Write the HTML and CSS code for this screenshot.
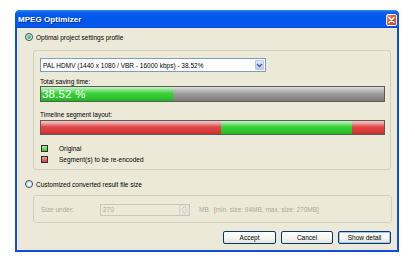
FILE: index.html
```html
<!DOCTYPE html>
<html>
<head>
<meta charset="utf-8">
<link rel="stylesheet" href="styles.css">
</head>
<body>
<div class="window">
  <div class="titlebar">
    <span class="title">MPEG Optimizer</span>
    <span class="close">
      <svg width="11" height="12" viewBox="0 0 11 12"><path d="M3 3.5 L8 8.5 M8 3.5 L3 8.5" stroke="#fff" stroke-width="1.6" stroke-linecap="round"/></svg>
    </span>
  </div>
  <div class="client">
    <div class="radio-row r1"><span class="radio checked"></span><span>Optimal project settings profile</span></div>
    <div class="group g1">
      <div class="combo">
        <span class="combo-text">PAL HDMV (1440 x 1080 / VBR - 16000 kbps) - 38.52%</span>
        <span class="combo-btn"><svg width="7" height="5" viewBox="0 0 7 5"><path d="M1 1 L3.5 3.5 L6 1" stroke="#4d6185" stroke-width="1.4" fill="none"/></svg></span>
      </div>
      <div class="label lbl-total">Total saving time:</div>
      <div class="bar saving">
        <div class="seg green" style="width:38.52%"></div>
        <div class="seg grey fill"></div>
        <span class="pct">38.52 %</span>
      </div>
      <div class="label lbl-timeline">Timeline segment layout:</div>
      <div class="bar timeline">
        <div class="seg red" style="width:52.5%"></div>
        <div class="seg green" style="width:38.3%"></div>
        <div class="seg red fill"></div>
      </div>
      <div class="legend">
        <div class="legend-row"><span class="swatch sw-green"></span><span>Original</span></div>
        <div class="legend-row"><span class="swatch sw-red"></span><span>Segment(s) to be re-encoded</span></div>
      </div>
    </div>
    <div class="radio-row r2"><span class="radio"></span><span>Customized converted result file size</span></div>
    <div class="group g2">
      <span class="size-label">Size under:</span>
      <span class="spin">
        <span class="spin-text">270</span>
        <span class="spin-btns">
          <span class="spin-b"><svg width="5" height="3" viewBox="0 0 5 3"><path d="M0.5 2.5 L2.5 0.5 L4.5 2.5" stroke="#c0bdb0" fill="none"/></svg></span>
          <span class="spin-b"><svg width="5" height="3" viewBox="0 0 5 3"><path d="M0.5 0.5 L2.5 2.5 L4.5 0.5" stroke="#c0bdb0" fill="none"/></svg></span>
        </span>
      </span>
      <span class="mb">MB</span>
      <span class="range">[min. size: 94MB, max. size: 270MB]</span>
    </div>
    <div class="buttons">
      <span class="btn">Accept</span>
      <span class="btn">Cancel</span>
      <span class="btn default">Show detail</span>
    </div>
  </div>
</div>
</body>
</html>
```
FILE: styles.css
```css
html, body {
  margin: 0;
  padding: 0;
  background: #fff;
}
body {
  font-family: "Liberation Sans", Arial, sans-serif;
  font-size: 6.5px;
  color: #000;
}
.window {
  margin: 10px 0 0 15px;
  width: 384px;
  height: 242px;
  display: flex;
  flex-direction: column;
  background: #0b4fdc;
  border-radius: 5px 5px 0 0;
  overflow: hidden;
}
.titlebar {
  height: 18px;
  flex: none;
  display: flex;
  align-items: center;
  justify-content: space-between;
  padding: 0 2px 0 3px;
  background: linear-gradient(#3a8cf8 0%, #0d62ef 12%, #0058ec 35%, #0056ea 70%, #0a5bee 88%, #0047d4 100%);
}
.title {
  color: #fff;
  font-weight: bold;
  font-size: 8px;
  text-shadow: 1px 1px 0 #0b2d97;
  letter-spacing: 0.05px;
}
.close {
  width: 11px;
  height: 12px;
  box-sizing: border-box;
  border: 1px solid #f3f3f3;
  border-radius: 2px;
  background: linear-gradient(135deg, #eb9a7e 0%, #dc5c35 40%, #c9411a 100%);
  display: flex;
  align-items: center;
  justify-content: center;
  margin-top: 1px;
}
.close svg { display: block; margin: -1px; }
.client {
  flex: 1;
  margin: 0 2px 2px 2px;
  background: #ece9d8;
  display: flex;
  flex-direction: column;
}
.radio-row {
  display: flex;
  align-items: center;
  height: 10px;
  margin-left: 8px;
  gap: 3px;
}
.r1 { margin-top: 4px; }
.r2 { margin-top: 9px; }
.radio {
  width: 8px;
  height: 8px;
  box-sizing: border-box;
  border: 1px solid #1c5180;
  border-radius: 50%;
  background: linear-gradient(135deg, #dcdcd5, #fff);
  display: flex;
  align-items: center;
  justify-content: center;
}
.radio.checked::after {
  content: "";
  width: 4px;
  height: 4px;
  border-radius: 50%;
  background: radial-gradient(circle at 35% 35%, #7de07d, #21a121);
}
.group {
  margin-left: 16px;
  width: 358px;
  box-sizing: border-box;
  border: 1px solid #d0d0bf;
  border-radius: 3px;
}
.g1 {
  margin-top: 8px;
  height: 120px;
  padding: 0 5px 0 6px;
  display: flex;
  flex-direction: column;
}
.combo {
  margin-top: 7px;
  width: 226px;
  height: 14px;
  box-sizing: border-box;
  border: 1px solid #7f9db9;
  background: #fff;
  display: flex;
  align-items: stretch;
}
.combo-text {
  flex: 1;
  padding-left: 2px;
  display: flex;
  align-items: center;
  white-space: nowrap;
  overflow: hidden;
}
.combo-btn {
  width: 9px;
  margin: 1px;
  box-sizing: border-box;
  border: 1px solid #b4c8f6;
  border-radius: 1px;
  background: linear-gradient(#dfe8fe, #b8cdfa);
  display: flex;
  align-items: center;
  justify-content: center;
}
.label {
  height: 8px;
  line-height: 8px;
  white-space: nowrap;
}
.lbl-total { margin-top: 6px; }
.lbl-timeline { margin-top: 9px; }
.bar {
  position: relative;
  display: flex;
  box-sizing: border-box;
  border: 1px solid #5b5b5b;
  width: 345px;
}
.saving { height: 16px; }
.timeline { height: 15px; margin-top: 1px; }
.seg { height: 100%; }
.fill { flex: 1; }
.green {
  background: linear-gradient(#c6f3c6 0%, #8be58b 20%, #3ad03a 45%, #2cc72c 75%, #22b422 100%);
}
.grey {
  background: linear-gradient(#e0e0e0 0%, #bcbcbc 22%, #9b9b9b 50%, #8a8a8a 75%, #7a7a7a 100%);
}
.red {
  background: linear-gradient(#f6c9c9 0%, #ee9a9a 20%, #e04848 45%, #db3c3c 75%, #c93030 100%);
}
.pct {
  position: absolute;
  left: 1px;
  top: 0;
  height: 100%;
  display: flex;
  align-items: center;
  color: #fff;
  font-size: 11.5px;
  letter-spacing: 0.2px;
}
.legend {
  margin-top: 8px;
  display: flex;
  flex-direction: column;
}
.legend-row {
  height: 11px;
  display: flex;
  align-items: center;
  gap: 11px;
  padding-left: 1px;
}
.swatch {
  width: 7px;
  height: 7px;
  box-sizing: border-box;
  border: 1px solid #2f2f2f;
}
.sw-green { background: linear-gradient(#a8eea8, #33c833); }
.sw-red { background: linear-gradient(#f0a8a8, #d83838); }
.g2 {
  margin-top: 6px;
  width: 359px;
  height: 28px;
  padding-left: 7px;
  display: flex;
  align-items: center;
  color: #aca899;
  white-space: nowrap;
}
.size-label { width: 59px; }
.spin {
  width: 90px;
  height: 12px;
  box-sizing: border-box;
  border: 1px solid #c9c7ba;
  display: flex;
  margin-top: 1px;
}
.spin-text {
  flex: 1;
  padding-left: 2px;
  display: flex;
  align-items: center;
}
.spin-btns {
  width: 9px;
  display: flex;
  flex-direction: column;
  border-left: 1px solid #dcdad0;
}
.spin-b {
  flex: 1;
  display: flex;
  align-items: center;
  justify-content: center;
  border: 1px solid #e2e0d6;
}
.mb { margin-left: 9px; }
.range { margin-left: 5px; }
.buttons {
  margin-top: 8px;
  display: flex;
  justify-content: flex-end;
  gap: 5px;
  padding-right: 6px;
}
.btn {
  width: 53px;
  height: 13px;
  box-sizing: border-box;
  border: 1px solid #003c74;
  border-radius: 2px;
  background: linear-gradient(#ffffff 0%, #f4f4f0 60%, #e3e2da 100%);
  display: flex;
  align-items: center;
  justify-content: center;
}
.btn:nth-child(2) { width: 52px; }
.btn.default {
  box-shadow: inset 0 0 0 1px #a9c3f5;
}
```
